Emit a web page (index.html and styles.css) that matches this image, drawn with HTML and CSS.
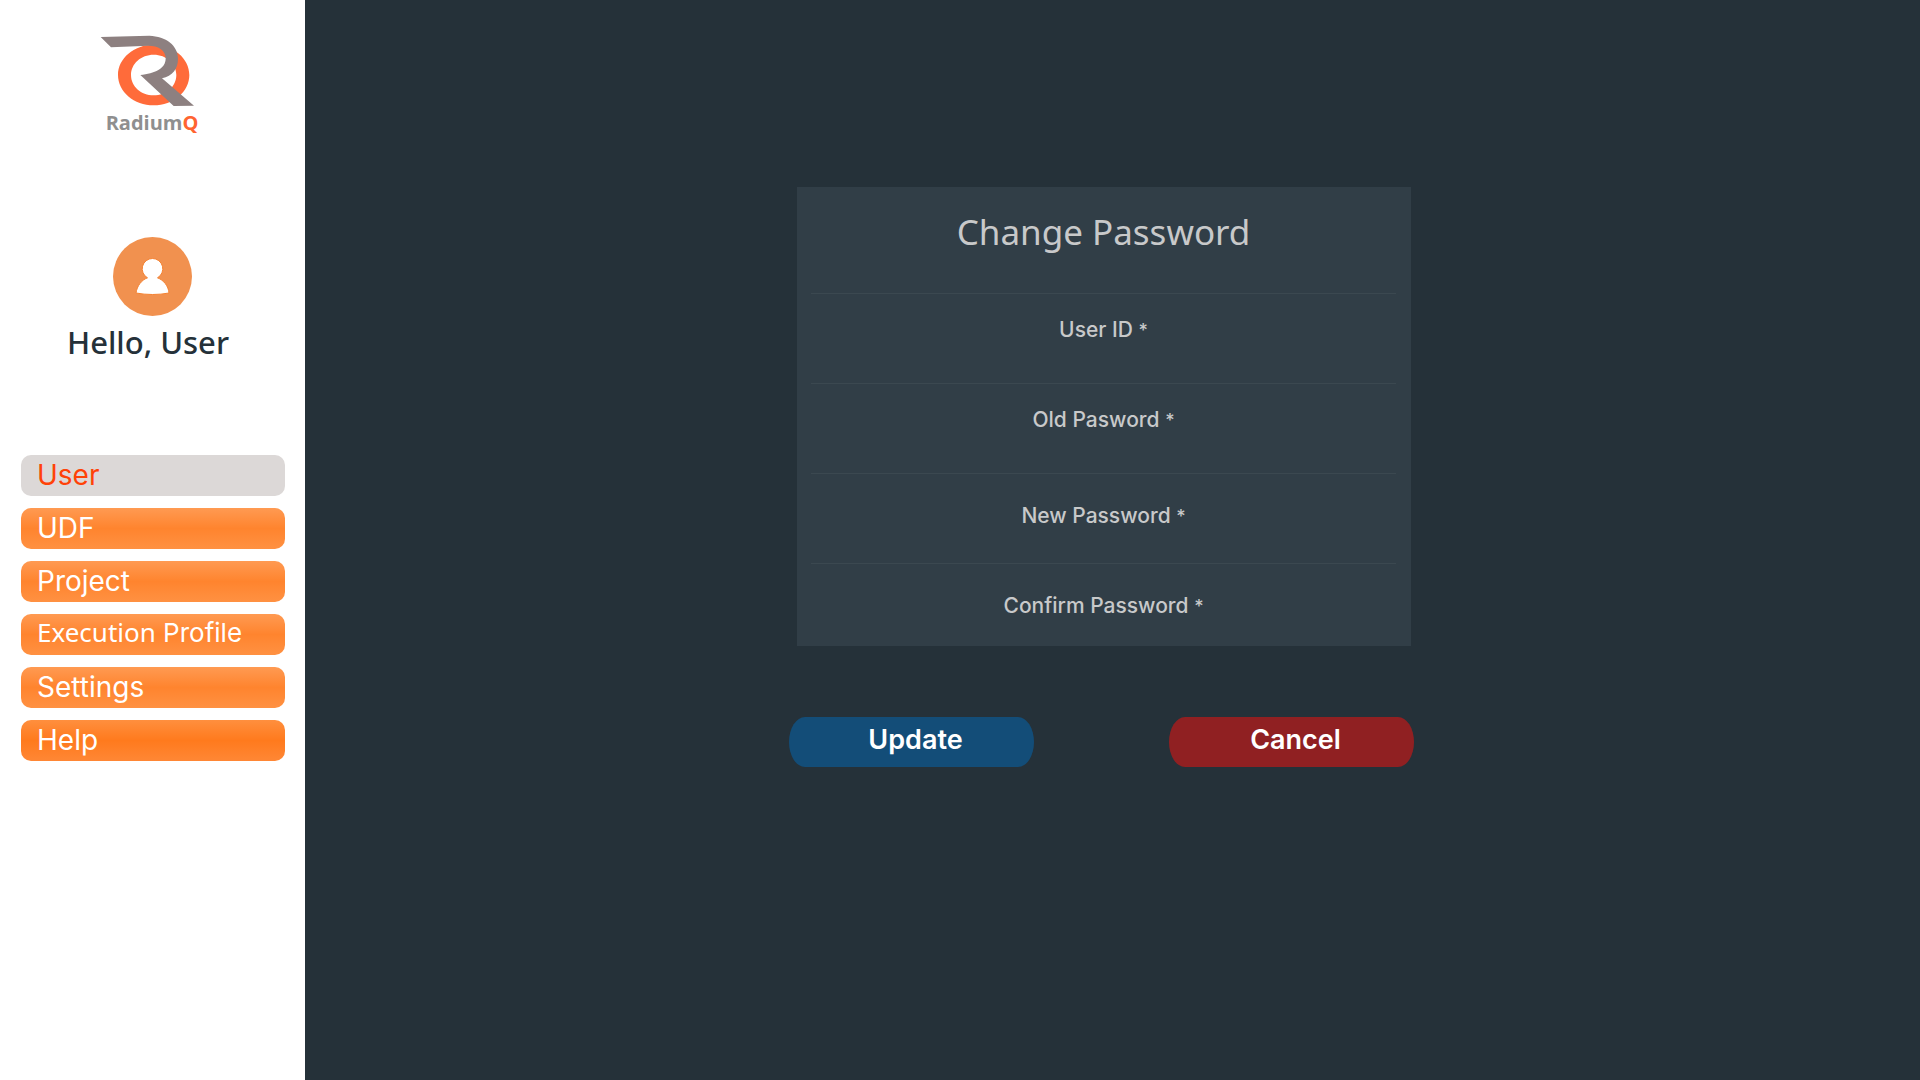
FILE: index.html
```html
<!DOCTYPE html>
<html lang="en">
<head>
<meta charset="utf-8">
<meta name="viewport" content="width=device-width, initial-scale=1">
<title>RadiumQ - Change Password</title>
<link rel="stylesheet" href="styles.css">
</head>
<body>
<div class="app">
  <aside class="sidebar">
    <a class="brand" href="#">
      <svg class="brand-mark" viewBox="60 45 285 216" aria-hidden="true">
        <path fill="#ff6b3a" fill-rule="evenodd" d="M221 74C280 74 328 115 328 165S280 256 221 256S114 215 114 165S162 74 221 74ZM221 104C183 104 153 131 153 165S183 226 221 226S289 199 289 165S259 104 221 104Z"/>
        <path fill="#8d8080" d="M62 51L208 47C258 49 294 76 294 116C294 147 278 167 246 175L342 257L281 258L181 165C224 161 257 147 257 115C257 90 234 77 205 77L93 82Z"/>
      </svg>
      <span class="brand-name">Radium<span class="brand-q">Q</span></span>
    </a>
    <div class="profile">
      <svg class="avatar" viewBox="0 0 79 79" aria-hidden="true">
        <circle cx="39.500" cy="39.500" r="39.500" fill="#f1914f"/>
        <path fill="#fff" stroke="#f58232" stroke-width="1" d="M39.500 21.500a10.300 10.300 0 0 1 5 19.300C50.500 43 55.500 49 56 56Q48 57.500 39.500 57.500T23 56C24 49 28.500 43 34.500 40.800A10.300 10.300 0 0 1 39.500 21.500Z"/>
      </svg>
      <p class="greeting">Hello, User</p>
    </div>
    <nav class="menu" aria-label="Main">
      <a class="menu-item menu-item-active" href="#user" aria-current="page">User</a>
      <a class="menu-item" href="#udf">UDF</a>
      <a class="menu-item" href="#project">Project</a>
      <a class="menu-item menu-item-long" href="#profile"><span class="humanist">Execution</span> Profile</a>
      <a class="menu-item" href="#settings">Settings</a>
      <a class="menu-item menu-item-strong" href="#help">Help</a>
    </nav>
  </aside>
  <main class="content">
    <form class="password-form">
      <section class="panel">
        <h1 class="panel-title">Change Password</h1>
        <div class="field">
          <label for="user-id">User ID <span class="star">*</span></label>
          <input id="user-id" type="text" required>
        </div>
        <div class="field">
          <label for="old-password">Old Pasword <span class="star">*</span></label>
          <input id="old-password" type="password" required>
        </div>
        <div class="field field-low">
          <label for="new-password">New Password <span class="star">*</span></label>
          <input id="new-password" type="password" required>
        </div>
        <div class="field field-low">
          <label for="confirm-password">Confirm Password <span class="star">*</span></label>
          <input id="confirm-password" type="password" required>
        </div>
      </section>
      <div class="actions">
        <button class="button button-primary" type="submit">Update</button>
        <button class="button button-danger" type="button">Cancel</button>
      </div>
    </form>
  </main>
</div>
</body>
</html>
```
FILE: styles.css
```css
* {
  box-sizing: border-box;
}

body {
  margin: 0;
  background: #253139;
  font-family: Inter, "Noto Sans", sans-serif;
}

.app {
  display: flex;
  min-height: 100vh;
}

.sidebar {
  flex: 0 0 305px;
  padding: 35px 20px 40px 21px;
  background: #fff;
}

.brand {
  display: flex;
  flex-direction: column;
  align-items: center;
  padding-right: 12px;
  text-decoration: none;
}

.brand-mark {
  width: 95px;
  height: 72px;
}

.brand-name {
  padding-left: 10px;
  font: 700 20px/32px "Open Sans", "Noto Sans", sans-serif;
  color: #8f8f8f;
}

.brand-q {
  color: #ff6431;
}

.profile {
  display: flex;
  flex-direction: column;
  align-items: center;
  margin-top: 98px;
  padding-right: 2px;
}

.avatar {
  width: 79px;
  height: 79px;
}

.greeting {
  margin: 6px 8px 0 0;
  font: 500 31px/40px "Noto Sans", sans-serif;
  color: #253139;
}

.menu {
  display: flex;
  flex-direction: column;
  gap: 12px;
  margin-top: 93px;
}

.menu-item {
  height: 41px;
  padding-left: 16px;
  border-radius: 10px;
  background: linear-gradient(#ff9a52, #ff842e 50%, #ff9142);
  font-size: 28px;
  font-weight: 400;
  line-height: 40px;
  color: #fff;
  text-decoration: none;
  white-space: nowrap;
}

.menu-item-active {
  background: #dcd8d7;
  color: #ff4208;
}

.menu-item-long {
  font-size: 26px;
  line-height: 36px;
}

.menu-item-strong {
  background: linear-gradient(#ff8f3e, #ff7a1d 50%, #ff8735);
}

.humanist {
  font-family: "Noto Sans", sans-serif;
}

.content {
  flex: 1;
  display: flex;
  justify-content: center;
  align-items: flex-start;
  padding: 187px 22px 40px 0;
}

.password-form {
  width: 625px;
  max-width: 100%;
}

.panel {
  margin: 0 3px 0 8px;
  padding: 0 15px 0 14px;
  background: #313e47;
  color: #c8c9ca;
}

.panel-title {
  margin: 0;
  padding: 20px 0 36px;
  font: 400 35px/50px "Noto Sans", sans-serif;
  text-align: center;
}

.field {
  display: flex;
  flex-direction: column;
  height: 90px;
  padding-top: 24px;
  border-top: 1px solid #3b4850;
  font-size: 21px;
  font-weight: 500;
  line-height: 24px;
  text-align: center;
}

.field-low {
  padding-top: 30px;
}

.field:last-child {
  height: 83px;
}

.star {
  font-size: 18px;
}

.field input {
  flex: 1;
  min-height: 0;
  width: 100%;
  padding: 0;
  border: 0;
  outline: 0;
  background: transparent;
  font: inherit;
  color: inherit;
  text-align: center;
}

.actions {
  display: flex;
  justify-content: space-between;
  gap: 24px;
  margin-top: 71px;
}

.button {
  width: 245px;
  height: 50px;
  padding: 0 0 4px 8px;
  border: 0;
  border-radius: 16px / 25px;
  font: 600 27px/46px Inter, "Noto Sans", sans-serif;
  color: #fff;
}

.button-primary {
  background: #134d78;
}

.button-danger {
  background: #902022;
}
```
